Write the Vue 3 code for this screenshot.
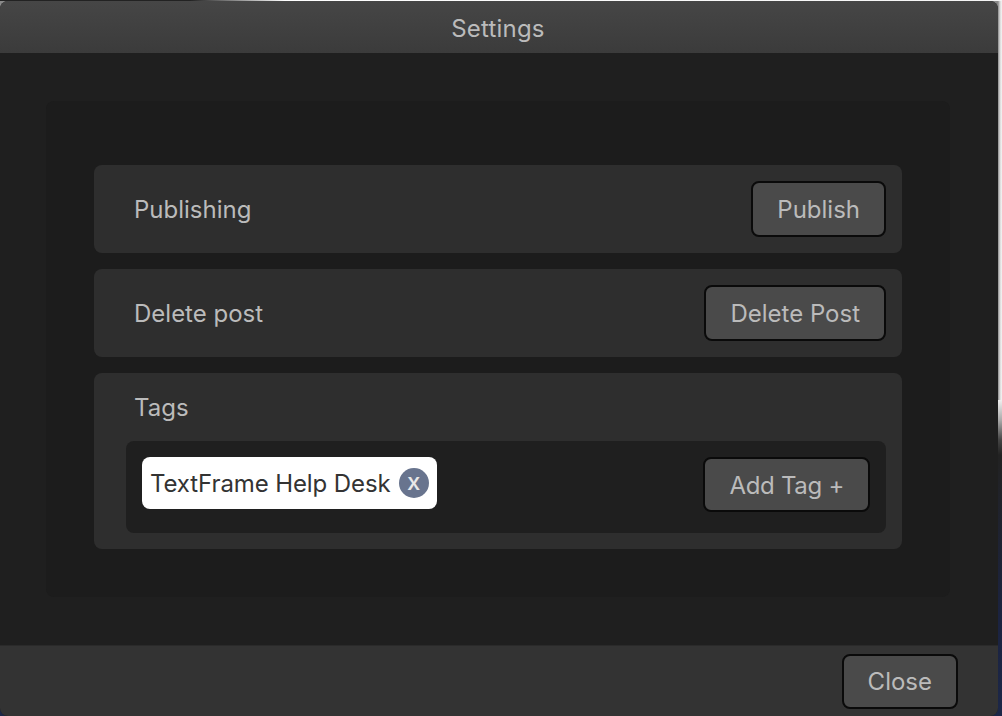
<script setup>
const rows = [
  { label: 'Publishing', action: 'Publish' },
  { label: 'Delete post', action: 'Delete Post' }
]
</script>

<template>
  <div class="desktop">
    <div class="window">
      <header class="head">Settings</header>
      <main class="body">
        <section class="panel">
          <div v-for="row in rows" :key="row.label" class="row">
            <span class="label">{{ row.label }}</span>
            <button class="btn">{{ row.action }}</button>
          </div>
          <div class="tags">
            <span class="label tags-title">Tags</span>
            <div class="tag-box">
              <span class="tag">
                <span class="tag-text">TextFrame Help Desk</span>
                <span class="tag-x"><span class="tag-x-glyph">x</span></span>
              </span>
              <button class="btn add">Add Tag +</button>
            </div>
          </div>
        </section>
      </main>
      <footer class="foot">
        <button class="btn close">Close</button>
      </footer>
    </div>
  </div>
</template>

<style>
html, body { margin: 0; background: #1a1d2e; }
</style>

<style scoped>
.desktop {
  width: 1002px;
  height: 716px;
  box-sizing: border-box;
  padding: 1px 4px 0 0;
  overflow: hidden;
  font-family: Inter, "Liberation Sans", sans-serif;
  background:
    linear-gradient(90deg, #222 0, #222 190px, #fff 285px, #f4f4f4 100%) top / 100% 1px no-repeat,
    linear-gradient(90deg, #8a8a8a 998px, #d8d8d8 1000px, #f6f6f6 1002px) top / 100% 400px no-repeat,
    linear-gradient(180deg, #f0f0f0 400px, #aaa 420px, #444 440px, #222 455px, #1b2340 620px, #1c2748 100%);
}
.window {
  height: 715px;
  display: flex;
  flex-direction: column;
  background: #1f1f1f;
  border-radius: 8px;
  overflow: hidden;
}
.head {
  height: 52px;
  flex: none;
  box-sizing: border-box;
  padding: 2px 2px 0 0;
  display: flex;
  align-items: center;
  justify-content: center;
  background: linear-gradient(180deg, #464646, #3b3b3b);
  color: #bbb;
  font-size: 24px;
  letter-spacing: 0.2px;
}
.body {
  flex: 1;
  padding: 48px 48px 48px 46px;
  min-height: 0;
}
.panel {
  height: 100%;
  box-sizing: border-box;
  padding: 64px 48px 48px;
  display: flex;
  flex-direction: column;
  gap: 16px;
  background: #1c1c1c;
  border-radius: 8px;
}
.row {
  height: 88px;
  box-sizing: border-box;
  padding: 16px 16px 16px 40px;
  display: flex;
  align-items: center;
  justify-content: space-between;
  background: #2e2e2e;
  border-radius: 8px;
}
.label {
  color: #bbb;
  font-size: 24px;
}
.btn {
  height: 56px;
  box-sizing: border-box;
  padding: 0 24px;
  border: 2px solid #0a0a0a;
  border-radius: 8px;
  background: #4a4a4a;
  color: #bbb;
  font: 24px Inter, "Liberation Sans", sans-serif;
}
.tags {
  height: 176px;
  box-sizing: border-box;
  padding: 17px 16px 16px 32px;
  background: #2e2e2e;
  border-radius: 8px;
}
.tags-title {
  display: block;
  margin-left: 8px;
  height: 36px;
  line-height: 36px;
}
.tag-box {
  height: 92px;
  margin-top: 15px;
  box-sizing: border-box;
  padding: 16px;
  display: flex;
  align-items: flex-start;
  justify-content: space-between;
  background: #1f1f1f;
  border-radius: 8px;
}
.tag {
  height: 52px;
  box-sizing: border-box;
  padding: 0 8px;
  display: flex;
  align-items: center;
  gap: 8px;
  background: #fff;
  border-radius: 8px;
  color: #333;
  font-size: 24px;
  letter-spacing: -0.1px;
}
.tag-x {
  width: 30px;
  height: 30px;
  display: flex;
  align-items: center;
  justify-content: center;
  border-radius: 50%;
  background: #68748e;
  color: #e8e8e8;
  font-size: 24px;
  font-weight: 500;
}
.tag-x-glyph {
  line-height: 26px;
  margin-bottom: 3px;
}
.add {
  height: 55px;
  padding-top: 2px;
  letter-spacing: -0.3px;
}
.foot {
  height: 71px;
  flex: none;
  box-sizing: border-box;
  padding: 8px 40px 0 0;
  display: flex;
  justify-content: flex-end;
  align-items: flex-start;
  background: #333;
  border-top: 1px solid #2a2a2a;
}
.close {
  height: 55px;
}
</style>
